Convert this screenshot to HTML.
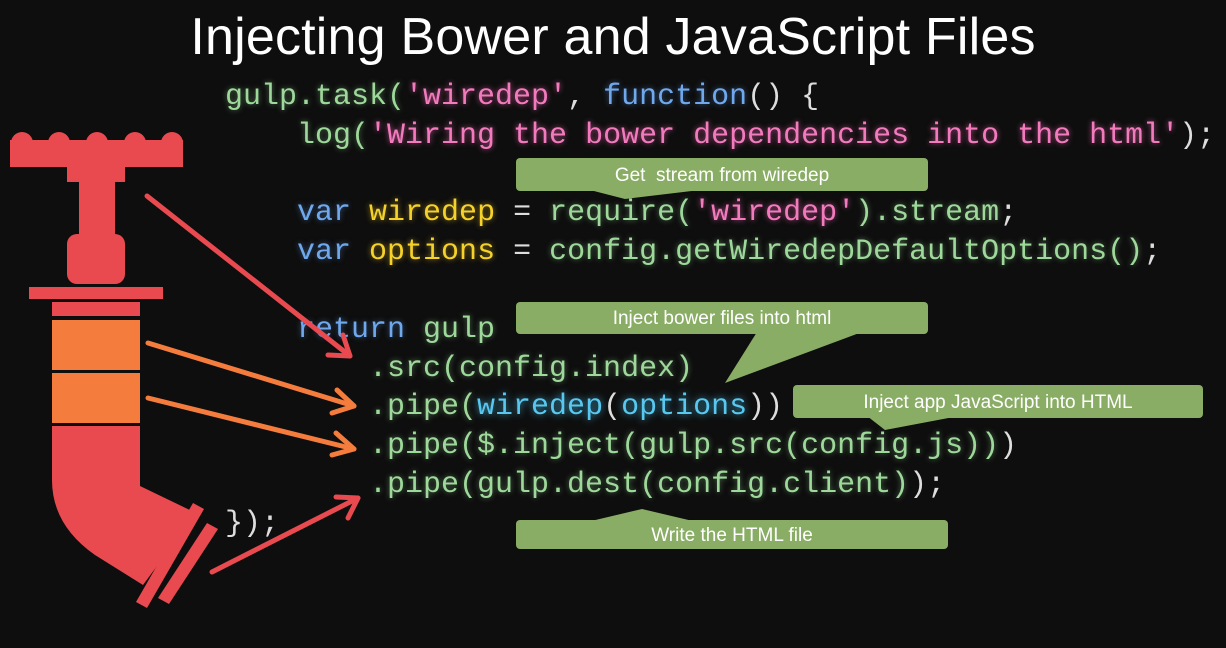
<!DOCTYPE html>
<html><head><meta charset="utf-8"><style>
html,body{margin:0;padding:0;background:#0e0e0e;}
body{width:1226px;height:648px;position:relative;overflow:hidden;}
.title{position:absolute;left:0;width:1226px;top:7px;text-align:center;color:#fff;font:52px "Liberation Sans",sans-serif;letter-spacing:0.2px;}
.code{position:absolute;font:30px/38.8px "Liberation Mono",monospace;white-space:pre;color:#9ed89a;text-shadow:0 0 6px rgba(150,220,150,.5);}
.g{color:#9ed89a}.p{color:#f27bbd;text-shadow:0 0 6px rgba(242,100,180,.7)}.b{color:#6fa8ec;text-shadow:0 0 6px rgba(100,160,240,.5)}.y{color:#f5d22a;text-shadow:0 0 6px rgba(245,200,40,.6)}.w{color:#ddd;text-shadow:none}.c{color:#58c8f0;text-shadow:0 0 8px rgba(80,200,240,.8)}
.box{position:absolute;background:#8aad65;border-radius:4px;color:#fff;font:19px "Liberation Sans",sans-serif;text-align:center;}
svg{position:absolute;left:0;top:0;}
</style></head><body>
<div class="title">Injecting Bower and JavaScript Files</div>
<svg width="1226" height="648">
<g fill="#8aad65">
<polygon points="590,190 700,190 625,199"/>
<polygon points="757,332 862,332 725,383"/>
<polygon points="867,416 959,416 885,430"/>
<polygon points="587,522 697,522 642,509"/>
</g>
</svg>
<div class="code" style="left:225px;top:78px"><span class="g">gulp.task(</span><span class="p">'wiredep'</span><span class="w">, </span><span class="b">function</span><span class="w">() {</span>
    <span class="g">log(</span><span class="p">'Wiring the bower dependencies into the html'</span><span class="w">);</span>

    <span class="b">var</span> <span class="y">wiredep</span><span class="w"> = </span>require(<span class="p">'wiredep'</span>).stream<span class="w">;</span>
    <span class="b">var</span> <span class="y">options</span><span class="w"> = </span>config.getWiredepDefaultOptions()<span class="w">;</span>

    <span class="b">return</span> gulp
        .src(config.index)
        .pipe(<span class="c">wiredep</span><span class="w">(</span><span class="c">options</span><span class="w">))</span>
        .pipe($.inject(gulp.src(config.js))<span class="w">)</span>
        .pipe(gulp.dest(config.client)<span class="w">);</span>
<span class="w">});</span></div>
<div class="box" style="left:516px;top:158px;width:412px;height:33px;line-height:35px">Get&nbsp; stream from wiredep</div>
<div class="box" style="left:516px;top:302px;width:412px;height:32px;line-height:34px">Inject bower files into html</div>
<div class="box" style="left:793px;top:385px;width:410px;height:33px;line-height:35px">Inject app JavaScript into HTML</div>
<div class="box" style="left:516px;top:520px;width:432px;height:29px;line-height:32px">Write the HTML file</div>
<svg width="1226" height="648">
<g fill="#e84a50">
<rect x="10" y="140" width="173" height="27"/>
<circle cx="22" cy="143" r="11"/><circle cx="59" cy="143" r="11"/><circle cx="97" cy="143" r="11"/><circle cx="135" cy="143" r="11"/><circle cx="172" cy="143" r="11"/>
<rect x="67" y="165" width="58" height="17"/>
<rect x="79" y="180" width="36" height="60"/>
<rect x="67" y="234" width="58" height="50" rx="10"/>
<rect x="29" y="287" width="134" height="12"/>
<rect x="52" y="302" width="88" height="14"/>
<path d="M52 426 H140 V486 L196 513 L143 585 L95 555 Q52 525 52 480 Z"/>
<polygon points="193,503 204,509 147,608 136,602"/>
<polygon points="207,523 218,529 169,604 158,598"/>
</g>
<rect x="52" y="320" width="88" height="50" fill="#f47c3c"/>
<rect x="52" y="373" width="88" height="50" fill="#f47c3c"/>
<g stroke-width="5" fill="none" stroke-linecap="round" stroke-linejoin="round">
<g stroke="#e84a50">
<line x1="147" y1="196" x2="350" y2="356"/><polyline points="328,355 350,356 343,335"/>
<line x1="212" y1="572" x2="358" y2="498"/><polyline points="336,497 358,498 348,518"/>
</g>
<g stroke="#f47c3c">
<line x1="148" y1="343" x2="354" y2="406"/><polyline points="337,390 354,406 332,413"/>
<line x1="148" y1="398" x2="354" y2="449"/><polyline points="336,433 354,449 332,455"/>
</g>
</g>
</svg>
</body></html>
